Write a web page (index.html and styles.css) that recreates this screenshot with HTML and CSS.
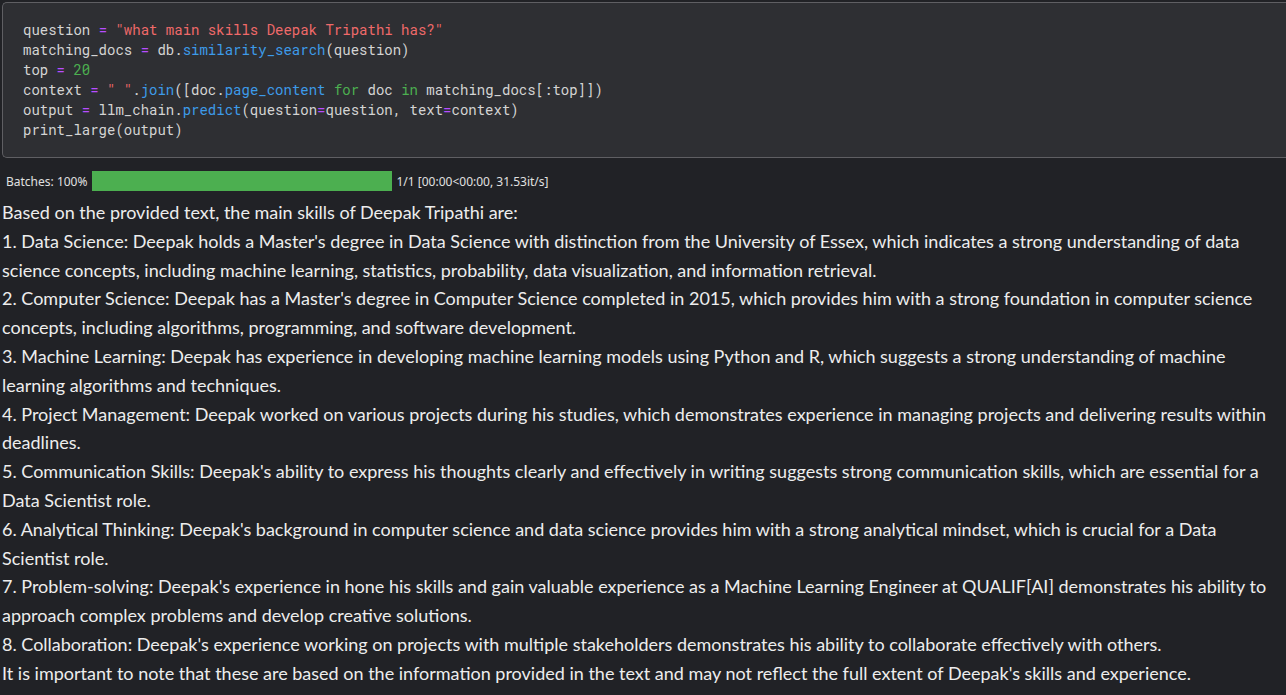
FILE: index.html
```html
<!DOCTYPE html>
<html>
<head>
<meta charset="utf-8">
<link rel="stylesheet" href="styles.css">
</head>
<body>
<div class="cell">
  <div class="code">
    <div class="ln">question <span class="op">=</span> <span class="str">"what main skills Deepak Tripathi has?"</span></div>
    <div class="ln">matching_docs <span class="op">=</span> db.<span class="fn">similarity_search</span>(question)</div>
    <div class="ln">top <span class="op">=</span> <span class="num">20</span></div>
    <div class="ln">context <span class="op">=</span> <span class="str">" "</span>.<span class="fn">join</span>([doc.<span class="fn">page_content</span> <span class="kw">for</span> doc <span class="kw">in</span> matching_docs[:top]])</div>
    <div class="ln">output <span class="op">=</span> llm_chain.<span class="fn">predict</span>(question<span class="op">=</span>question, text<span class="op">=</span>context)</div>
    <div class="ln">print_large(output)</div>
  </div>
</div>
<div class="progress">
  <span class="plabel">Batches: 100%</span>
  <span class="bar"><span class="fill"></span></span>
  <span class="pstat">1/1 [00:00&lt;00:00, 31.53it/s]</span>
</div>
<div class="output">
<p>Based on the provided text, the main skills of Deepak Tripathi are:</p>
<p>1. Data Science: Deepak holds a Master's degree in Data Science with distinction from the University of Essex, which indicates a strong understanding of data<br>science concepts, including machine learning, statistics, probability, data visualization, and information retrieval.</p>
<p>2. Computer Science: Deepak has a Master's degree in Computer Science completed in 2015, which provides him with a strong foundation in computer science<br>concepts, including algorithms, programming, and software development.</p>
<p>3. Machine Learning: Deepak has experience in developing machine learning models using Python and R, which suggests a strong understanding of machine<br>learning algorithms and techniques.</p>
<p>4. Project Management: Deepak worked on various projects during his studies, which demonstrates experience in managing projects and delivering results within<br>deadlines.</p>
<p>5. Communication Skills: Deepak's ability to express his thoughts clearly and effectively in writing suggests strong communication skills, which are essential for a<br>Data Scientist role.</p>
<p>6. Analytical Thinking: Deepak's background in computer science and data science provides him with a strong analytical mindset, which is crucial for a Data<br>Scientist role.</p>
<p>7. Problem-solving: Deepak's experience in hone his skills and gain valuable experience as a Machine Learning Engineer at QUALIF[AI] demonstrates his ability to<br>approach complex problems and develop creative solutions.</p>
<p>8. Collaboration: Deepak's experience working on projects with multiple stakeholders demonstrates his ability to collaborate effectively with others.</p>
<p>It is important to note that these are based on the information provided in the text and may not reflect the full extent of Deepak's skills and experience.</p>
</div>
</body>
</html>
```
FILE: styles.css
```css
html, body {
  margin: 0;
  padding: 0;
  background: #212226;
  overflow: hidden;
}
body {
  padding: 2px 0 0 2px;
}
.cell {
  background: #2e2f33;
  border: 1px solid #5f5f63;
  border-right: none;
  border-radius: 5px 0 0 5px;
  height: 156px;
  box-sizing: border-box;
  padding: 17px 0 0 20px;
}
.code {
  font-family: "Roboto Mono", "Liberation Mono", monospace;
  font-size: 14px;
  line-height: 20px;
  color: #d4d4d4;
}
.ln {
  white-space: pre;
}
.op { color: #b84dff; }
.str { color: #f06a6a; }
.fn { color: #3d9be9; }
.num { color: #4caf50; }
.kw { color: #4caf50; }
.progress {
  display: flex;
  align-items: center;
  height: 20px;
  margin-top: 13px;
  padding-left: 4px;
  font-family: "Noto Sans", sans-serif;
  font-size: 12px;
  color: #e0e0e0;
}
.bar {
  width: 300px;
  height: 20px;
  margin: 0 4px 0 5px;
  display: flex;
}
.fill {
  flex: 1;
  background: #4caf50;
}
.output {
  margin-top: 7px;
  font-family: "Lato", sans-serif;
  font-size: 18px;
  line-height: 28.8px;
  color: #ededed;
  white-space: nowrap;
}
.output p {
  margin: 0;
}
```
